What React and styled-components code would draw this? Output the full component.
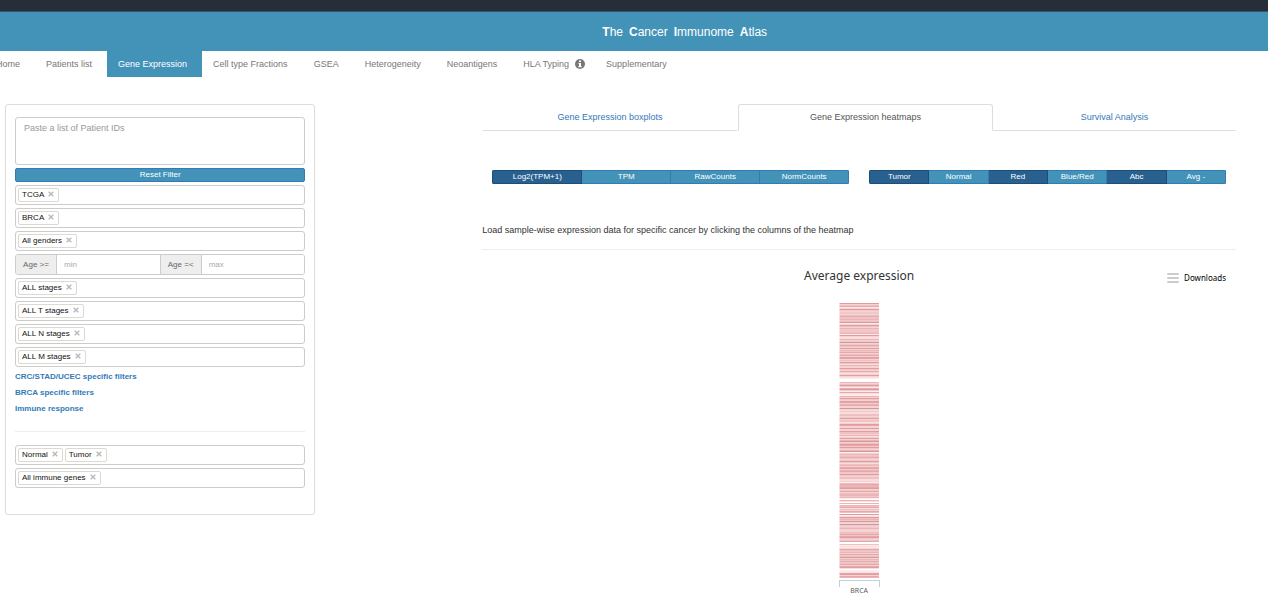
import React, { useState } from 'react';
import styled, { createGlobalStyle } from 'styled-components';

const GlobalStyle = createGlobalStyle`
  * {
    box-sizing: border-box;
  }
  body {
    margin: 0;
    background: #fff;
    color: #333;
    font-family: "Liberation Sans", Arial, sans-serif;
    font-size: 9px;
    line-height: 12px;
  }
  button, input, textarea {
    font-family: inherit;
  }
`;

const TopStrip = styled.div`
  height: 12px;
  background: #282d3a;
  border-bottom: 1px solid #33566c;
`;

const Header = styled.header`
  display: flex;
  align-items: center;
  justify-content: center;
  height: 39px;
  padding-left: 8%;
  background: #4393b9;
`;

const SiteTitle = styled.h1`
  display: flex;
  gap: 6px;
  margin: 0;
  color: #fff;
  font-size: 12px;
  font-weight: normal;
`;

const Nav = styled.nav`
  display: flex;
  height: 26px;
  margin-left: -15px;
`;

const NavLink = styled.a`
  display: flex;
  align-items: center;
  gap: 6px;
  padding: 0 ${({ $tight }) => ($tight ? 10 : 15)}px 0 11px;
  background: ${({ $active }) => ($active ? '#4393b9' : 'transparent')};
  color: ${({ $active }) => ($active ? '#fff' : '#777')};
  text-decoration: none;
  white-space: nowrap;
`;

const Page = styled.div`
  display: grid;
  grid-template-columns: minmax(0, 7fr) minmax(0, 17fr);
  column-gap: 167px;
  align-items: start;
  padding: 27px 32px 0 5px;
`;

const Panel = styled.aside`
  padding: 12px 9px 26px;
  border: 1px solid #ddd;
  border-radius: 3px;
`;

const Fields = styled.div`
  display: flex;
  flex-direction: column;
  gap: 3px;
`;

const PatientIds = styled.textarea`
  display: block;
  width: 100%;
  height: 48px;
  padding: 4px 8px;
  border: 1px solid #ccc;
  border-radius: 3px;
  font-size: 9px;
  line-height: 13px;
  resize: none;

  &::placeholder {
    color: #999;
  }
`;

const ResetButton = styled.button`
  height: 14px;
  padding: 0;
  border: 1px solid #337ab7;
  border-radius: 2px;
  background: #4393b9;
  color: #fff;
  font-size: 8px;
  line-height: 12px;
  cursor: pointer;
`;

const TagBox = styled.div`
  display: flex;
  align-items: center;
  gap: 2px;
  height: 20px;
  padding: 0 2px;
  border: 1px solid #ccc;
  border-radius: 3px;
`;

const Tag = styled.span`
  display: flex;
  gap: 4px;
  height: 14px;
  padding: 0 4px 0 3px;
  border: 1px solid #ddd8d0;
  border-radius: 2px;
  color: #111;
  font-size: 8px;
  line-height: 12px;
  white-space: nowrap;
`;

const RemoveButton = styled.button`
  display: flex;
  padding: 2px 0 0;
  border: 0;
  background: none;
  color: #bbb;
  cursor: pointer;
`;

const AgeRow = styled.div`
  display: flex;
  height: 21px;
  border: 1px solid #ccc;
  border-radius: 3px;
  overflow: hidden;
`;

const AgeLabel = styled.label`
  flex: none;
  width: 40px;
  background: #eee;
  color: #666;
  font-size: 8px;
  line-height: 19px;
  text-align: center;
`;

const AgeInput = styled.input`
  flex: 1;
  min-width: 0;
  padding: 0 7px;
  border: 0;
  border-left: 1px solid #ccc;
  font-size: 8px;

  &:not(:last-child) {
    border-right: 1px solid #ccc;
  }
  &::placeholder {
    color: #aaa;
  }
`;

const FilterLinks = styled.div`
  display: flex;
  flex-direction: column;
  align-items: flex-start;
  padding-top: 2px;
`;

const FilterLink = styled.a`
  color: #337ab7;
  font-size: 8px;
  font-weight: bold;
  line-height: 16px;
  text-decoration: none;
`;

const Rule = styled.hr`
  margin: ${({ $space }) => $space};
  border: 0;
  border-top: 1px solid #eee;
`;

const Tabs = styled.div`
  display: flex;
  height: 27px;
`;

const Tab = styled.button`
  flex: ${({ $grow }) => $grow} 1 0;
  padding: 0 0 2px;
  border: 1px solid;
  border-color: ${({ $active }) => ($active ? '#ddd #ddd transparent' : 'transparent transparent #ddd')};
  border-radius: ${({ $active }) => ($active ? '3px 3px 0 0' : '0')};
  background: none;
  color: ${({ $active }) => ($active ? '#555' : '#337ab7')};
  font-size: 9px;
  cursor: pointer;
`;

const Toolbar = styled.div`
  display: grid;
  grid-template-columns: 1fr 1fr;
  gap: 20px;
  padding: 39px 10px 36px;
`;

const ButtonGroup = styled.div`
  display: flex;
  border-radius: 2px;
  overflow: hidden;
`;

const GroupButton = styled.button`
  flex: 1 1 0;
  height: 14px;
  padding: 0;
  border: 1px solid ${({ $active }) => ($active ? '#204d74' : '#337ab7')};
  background: ${({ $active }) => ($active ? '#286090' : '#4393b9')};
  color: #fff;
  font-size: 8px;
  line-height: 12px;
  cursor: pointer;

  &:not(:first-child) {
    border-left: 0;
  }
`;

const Hint = styled.p`
  margin: 0;
  line-height: 20px;
`;

const ChartHead = styled.div`
  display: grid;
  grid-template-columns: 1fr auto 1fr;
  align-items: center;
  padding: 16px 10px 18px;
`;

const ChartTitle = styled.h2`
  grid-column: 2;
  margin: 0;
  font-family: "Noto Sans", sans-serif;
  font-size: 12px;
  font-weight: normal;
  line-height: 19px;
`;

const DownloadButton = styled.button`
  display: flex;
  align-items: center;
  justify-self: end;
  gap: 5px;
  padding: 5px 0 0;
  border: 0;
  background: none;
  color: #000;
  font-family: "Noto Sans", sans-serif;
  font-size: 8px;
  line-height: 12px;
  cursor: pointer;
`;

const Figure = styled.figure`
  display: flex;
  flex-direction: column;
  align-items: center;
  margin: 0;
`;

const Caption = styled.figcaption`
  color: #606060;
  font-family: "Noto Sans", sans-serif;
  font-size: 7px;
  line-height: 8px;
`;

const navItems = [
  { label: 'Home' },
  { label: 'Patients list' },
  { label: 'Gene Expression', active: true },
  { label: 'Cell type Fractions' },
  { label: 'GSEA' },
  { label: 'Heterogeneity' },
  { label: 'Neoantigens' },
  { label: 'HLA Typing', info: true },
  { label: 'Supplementary' },
];

const tabs = [
  { label: 'Gene Expression boxplots', grow: 20 },
  { label: 'Gene Expression heatmaps', grow: 20 },
  { label: 'Survival Analysis', grow: 19 },
];

// one digit per gene, 0 = not expressed, 9 = highest
const expression = [
  '8357138434435745645913853644456183226349',
  '347538364735738735384263384373238321000',
  '6358417841721163843874673393242255348354',
  '2387338338553623836935874843691364574348',
  '425637746744843552',
  '23157667834735664610',
  '62060657253750812856',
  '49339434633355747843',
  '57005121375463745936',
  '474573782011278376',
].join('').slice(0, 277);

const shades = [
  '#ffffff', '#fcecec', '#f9dede', '#f6d3d3', '#f1c8c9',
  '#eec0c1', '#edb4b5', '#e6a9ab', '#e29b9e', '#cf9b9e',
];

function InfoIcon() {
  return (
    <svg width="10" height="10" viewBox="0 0 10 10" aria-hidden="true">
      <circle cx="5" cy="5" r="5" fill="#777" />
      <path d="M4 1.6h2v1.5H4zM3.5 4H6v3.1h.7v1.1H3.4V7.1H4V5.1h-.5z" fill="#fff" />
    </svg>
  );
}

function CrossIcon() {
  return (
    <svg width="6" height="6" viewBox="0 0 6 6" aria-hidden="true">
      <path d="M.7 .7L5.3 5.3M5.3 .7L.7 5.3" stroke="currentColor" strokeWidth="1.5" />
    </svg>
  );
}

function MenuIcon() {
  return (
    <svg width="12" height="10" viewBox="0 0 12 10" aria-hidden="true">
      <path d="M1 1h10M1 5h10M1 9h10" stroke="#ccc" strokeWidth="2" strokeLinecap="round" />
    </svg>
  );
}

function TagField({ tags }) {
  const [items, setItems] = useState(tags);
  return (
    <TagBox>
      {items.map((item) => (
        <Tag key={item}>
          {item}
          <RemoveButton
            type="button"
            aria-label={`Remove ${item}`}
            onClick={() => setItems(items.filter((other) => other !== item))}>
            <CrossIcon />
          </RemoveButton>
        </Tag>
      ))}
    </TagBox>
  );
}

function Filters() {
  return (
    <Panel>
      <Fields>
        <PatientIds aria-label="Patient IDs" placeholder="Paste a list of Patient IDs" />
        <ResetButton type="button">Reset Filter</ResetButton>
        <TagField tags={['TCGA']} />
        <TagField tags={['BRCA']} />
        <TagField tags={['All genders']} />
        <AgeRow>
          <AgeLabel htmlFor="age-min">Age &gt;=</AgeLabel>
          <AgeInput id="age-min" placeholder="min" />
          <AgeLabel htmlFor="age-max">Age =&lt;</AgeLabel>
          <AgeInput id="age-max" placeholder="max" />
        </AgeRow>
        <TagField tags={['ALL stages']} />
        <TagField tags={['ALL T stages']} />
        <TagField tags={['ALL N stages']} />
        <TagField tags={['ALL M stages']} />
      </Fields>
      <FilterLinks>
        <FilterLink href="#crc">CRC/STAD/UCEC specific filters</FilterLink>
        <FilterLink href="#brca">BRCA specific filters</FilterLink>
        <FilterLink href="#immune">Immune response</FilterLink>
      </FilterLinks>
      <Rule $space="14px 0 13px" />
      <Fields>
        <TagField tags={['Normal', 'Tumor']} />
        <TagField tags={['All immune genes']} />
      </Fields>
    </Panel>
  );
}

function Options({ labels, active }) {
  return (
    <ButtonGroup>
      {labels.map((label) => (
        <GroupButton key={label} type="button" $active={active.includes(label)}>
          {label}
        </GroupButton>
      ))}
    </ButtonGroup>
  );
}

function Heatmap() {
  return (
    <Figure>
      <svg width="41" height="284" viewBox="0 0 41 284" shapeRendering="crispEdges" role="img" aria-label="BRCA">
        {expression.split('').map((level, i) => (
          <rect key={i} x="0" y={i} width="40" height="1" fill={shades[level]} />
        ))}
        <rect x="0" y="0" width="1" height="277" fill="#fff" opacity="0.5" />
        <path d="M.5 284V277.5H40.5V284" fill="none" stroke="#c0d0e0" />
      </svg>
      <Caption>BRCA</Caption>
    </Figure>
  );
}

function App() {
  const [current, setCurrent] = useState('Gene Expression heatmaps');
  return (
    <>
      <GlobalStyle />
      <TopStrip />
      <Header>
        <SiteTitle>
          <span><b>T</b>he</span>
          <span><b>C</b>ancer</span>
          <span><b>I</b>mmunome</span>
          <span><b>A</b>tlas</span>
        </SiteTitle>
      </Header>
      <Nav>
        {navItems.map(({ label, active, info }) => (
          <NavLink key={label} href="#" $active={active} $tight={info}>
            {label}
            {info && <InfoIcon />}
          </NavLink>
        ))}
      </Nav>
      <Page>
        <Filters />
        <main>
          <Tabs role="tablist">
            {tabs.map(({ label, grow }) => (
              <Tab
                key={label}
                type="button"
                role="tab"
                aria-selected={label === current}
                $grow={grow}
                $active={label === current}
                onClick={() => setCurrent(label)}>
                {label}
              </Tab>
            ))}
          </Tabs>
          <Toolbar>
            <Options labels={['Log2(TPM+1)', 'TPM', 'RawCounts', 'NormCounts']} active={['Log2(TPM+1)']} />
            <Options
              labels={['Tumor', 'Normal', 'Red', 'Blue/Red', 'Abc', 'Avg -']}
              active={['Tumor', 'Red', 'Abc']}
            />
          </Toolbar>
          <Hint>Load sample-wise expression data for specific cancer by clicking the columns of the heatmap</Hint>
          <Rule $space="9px 0 0" />
          <ChartHead>
            <ChartTitle>Average expression</ChartTitle>
            <DownloadButton type="button">
              <MenuIcon />
              Downloads
            </DownloadButton>
          </ChartHead>
          <Heatmap />
        </main>
      </Page>
    </>
  );
}

export default App;
